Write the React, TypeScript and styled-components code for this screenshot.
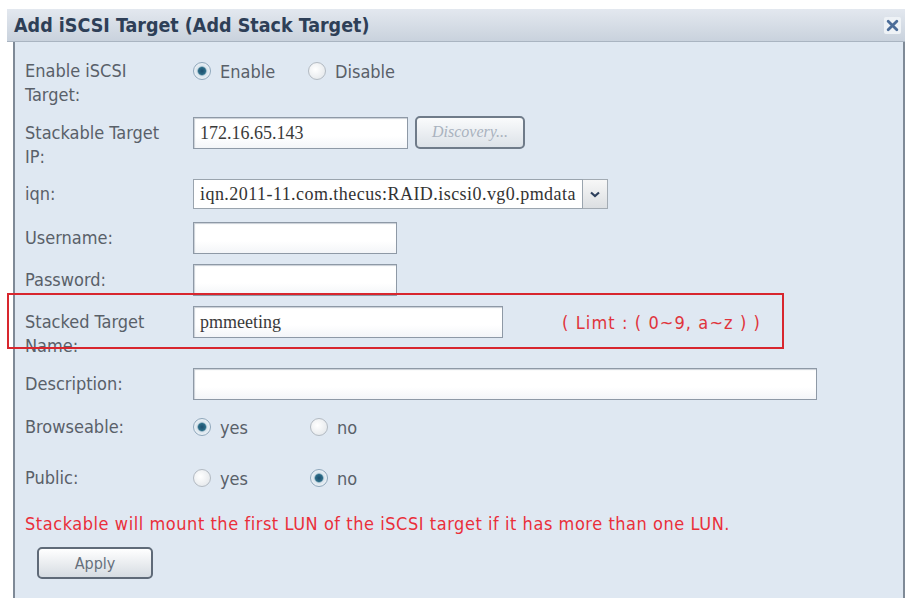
import styled, { createGlobalStyle } from "styled-components";

const GlobalStyle = createGlobalStyle`
  body {
    margin: 0;
    background: #ffffff;
    font-family: "DejaVu Sans Condensed", "DejaVu Sans", sans-serif;
    font-stretch: condensed;
  }
`;

const Dialog = styled.div`
  margin: 9px 4px 0 7px;
  width: 898px;
`;
const Header = styled.div`
  height: 32px;
  display: flex;
  align-items: center;
  justify-content: space-between;
  padding: 0 4px 0 7px;
  background: linear-gradient(#e3e8ef, #c9d2dd);
  border-bottom: 1px solid #a9b4c1;
`;
const Title = styled.div`
  font-weight: bold;
  font-size: 19.5px;
  color: #2e3f57;
`;
const Close = styled.div`
  width: 17px;
  height: 17px;
  display: flex;
  align-items: center;
  justify-content: center;
  background: #eef2f6;
  border-radius: 2px;
`;
const Panel = styled.div`
  margin-left: 6px;
  height: 560px;
  padding-top: 17px;
  background: #dfe8f2;
  border-left: 2px solid #7f8a97;
  border-right: 2px solid #7f8a97;
  color: #596069;
  font-size: 18px;
`;
const Row = styled.div<{ $h: number }>`
  position: relative;
  display: grid;
  grid-template-columns: 168px 1fr;
  align-items: start;
  height: ${(p) => p.$h}px;
  padding-left: 10px;
`;
const Label = styled.div<{ $pad?: number }>`
  line-height: 24px;
  padding-top: ${(p) => p.$pad ?? 0}px;
`;
const Controls = styled.div`
  display: flex;
  align-items: center;
`;
const TextInput = styled.div<{ $w: number }>`
  box-sizing: border-box;
  width: ${(p) => p.$w}px;
  height: 32px;
  background: linear-gradient(#ffffff 60%, #f3f5f8);
  border: 1px solid #8e99a6;
  box-shadow: inset 1px 1px 1px #c9cfd6;
  font-family: "Liberation Serif", serif;
  font-size: 18px;
  color: #3a3a3a;
  line-height: 30px;
  padding-left: 6px;
`;
const DiscoveryButton = styled.div`
  box-sizing: border-box;
  width: 110px;
  height: 33px;
  margin-left: 7px;
  margin-top: -2px;
  border: 2px solid #6f7b89;
  border-radius: 5px;
  background: linear-gradient(#fafbfc, #dce2e8);
  font-family: "Liberation Serif", serif;
  font-style: italic;
  font-size: 16px;
  color: #a9b2be;
  display: flex;
  align-items: center;
  justify-content: center;
`;
const SelectText = styled.div`
  box-sizing: border-box;
  width: 390px;
  height: 30px;
  background: #ffffff;
  border: 1px solid #9aa4ae;
  font-family: "Liberation Serif", serif;
  font-size: 18px;
  letter-spacing: 0.45px;
  color: #333;
  line-height: 28px;
  padding-left: 6px;
  white-space: nowrap;
  overflow: hidden;
`;
const SelectArrow = styled.div`
  box-sizing: border-box;
  width: 25px;
  height: 30px;
  border: 1px solid #a3abb3;
  border-left: none;
  background: linear-gradient(#f7f7f7, #dcdfe2);
  display: flex;
  align-items: center;
  justify-content: center;
`;
const RadioOption = styled.div<{ $w: number }>`
  width: ${(p) => p.$w}px;
  display: flex;
  align-items: center;
  gap: 9px;
  height: 24px;
`;
const RadioDot = styled.span<{ $on?: boolean }>`
  box-sizing: border-box;
  width: 18px;
  height: 18px;
  border-radius: 50%;
  border: 1px solid ${(p) => (p.$on ? "#8fa7bb" : "#b3bac2")};
  background: ${(p) =>
    p.$on
      ? "radial-gradient(circle, #1d4e6e 0, #2b6b86 3.5px, #d7e3ec 5px, #f4f7fa 9px)"
      : "radial-gradient(circle at 40% 40%, #ffffff, #dfe3e7)"};
`;
const Highlight = styled.div`
  position: absolute;
  left: -8px;
  top: -13px;
  width: 777px;
  height: 56px;
  box-sizing: border-box;
  border: 2px solid #d8262e;
  pointer-events: none;
`;
const Hint = styled.div`
  margin-left: 59px;
  color: #e0343c;
  font-size: 18px;
  letter-spacing: 1.1px;
`;
const Note = styled.div`
  height: 35px;
  padding-left: 10px;
  line-height: 24px;
  color: #ea2f3a;
  font-size: 18px;
  letter-spacing: 0.55px;
  white-space: nowrap;
`;
const ApplyButton = styled.div`
  box-sizing: border-box;
  margin-left: 22px;
  width: 116px;
  height: 32px;
  border: 2px solid #5f6a78;
  border-radius: 5px;
  background: linear-gradient(#ffffff, #d6dce2);
  color: #66707c;
  font-size: 16px;
  display: flex;
  align-items: center;
  justify-content: center;
`;

const Radio = ({ on, text, w }: { on?: boolean; text: string; w: number }) => (
  <RadioOption $w={w}>
    <RadioDot $on={on} />
    {text}
  </RadioOption>
);

const App = () => {
  return (
    <>
      <GlobalStyle />
      <Dialog>
        <Header>
          <Title>Add iSCSI Target (Add Stack Target)</Title>
          <Close>
            <svg width="13" height="13" viewBox="0 0 12 12">
              <path d="M2 2L10 10M10 2L2 10" stroke="#4b6c98" strokeWidth="2.6" strokeLinecap="round" />
            </svg>
          </Close>
        </Header>
        <Panel>
          <Row $h={58}>
            <Label>
              Enable iSCSI
              <br />
              Target:
            </Label>
            <Controls>
              <Radio on text="Enable" w={115} />
              <Radio text="Disable" w={120} />
            </Controls>
          </Row>
          <Row $h={62}>
            <Label $pad={4}>
              Stackable Target
              <br />
              IP:
            </Label>
            <Controls>
              <TextInput $w={215}>172.16.65.143</TextInput>
              <DiscoveryButton>Discovery...</DiscoveryButton>
            </Controls>
          </Row>
          <Row $h={43}>
            <Label $pad={3}>iqn:</Label>
            <Controls>
              <SelectText>iqn.2011-11.com.thecus:RAID.iscsi0.vg0.pmdata</SelectText>
              <SelectArrow>
                <svg width="10" height="7" viewBox="0 0 10 7">
                  <path d="M1 1.5L5 5L9 1.5" fill="none" stroke="#2d3f5c" strokeWidth="2.2" />
                </svg>
              </SelectArrow>
            </Controls>
          </Row>
          <Row $h={42}>
            <Label $pad={4}>Username:</Label>
            <Controls>
              <TextInput $w={204} />
            </Controls>
          </Row>
          <Row $h={42}>
            <Label $pad={4}>Password:</Label>
            <Controls>
              <TextInput $w={204} />
            </Controls>
          </Row>
          <Row $h={62}>
            <Label $pad={4}>
              Stacked Target
              <br />
              Name:
            </Label>
            <Controls>
              <TextInput $w={310}>pmmeeting</TextInput>
              <Hint>( Limt : ( 0~9, a~z ) )</Hint>
            </Controls>
            <Highlight />
          </Row>
          <Row $h={47}>
            <Label $pad={4}>Description:</Label>
            <Controls>
              <TextInput $w={624} />
            </Controls>
          </Row>
          <Row $h={51}>
            <Label>Browseable:</Label>
            <Controls>
              <Radio on text="yes" w={117} />
              <Radio text="no" w={60} />
            </Controls>
          </Row>
          <Row $h={46}>
            <Label>Public:</Label>
            <Controls>
              <Radio text="yes" w={117} />
              <Radio on text="no" w={60} />
            </Controls>
          </Row>
          <Note>Stackable will mount the first LUN of the iSCSI target if it has more than one LUN.</Note>
          <ApplyButton>Apply</ApplyButton>
        </Panel>
      </Dialog>
    </>
  );
};

export default App;
